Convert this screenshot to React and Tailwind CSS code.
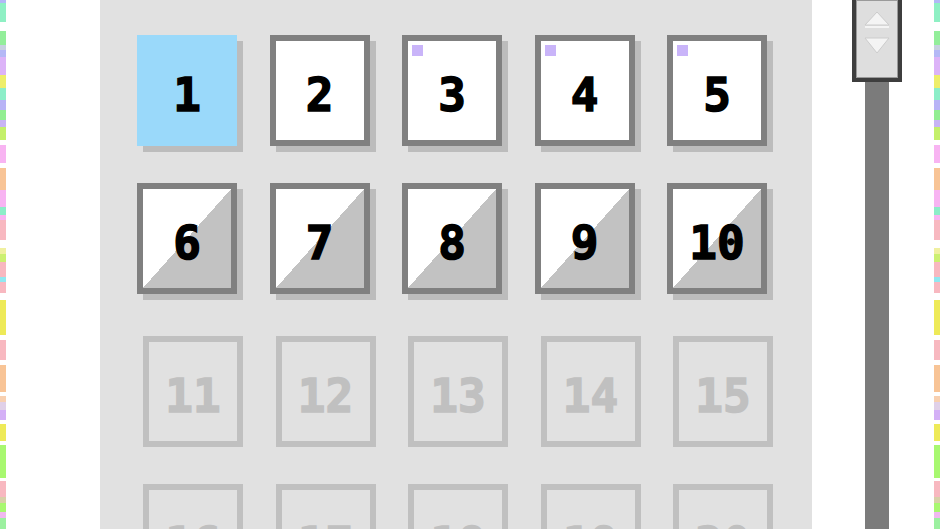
import React from "react";

// pastel edge strip, top to bottom
const stripe = [
  "h-[3px] bg-[#b3b8f7]",
  "h-[19px] bg-[#8ff0c4]",
  "h-[9px] bg-white",
  "h-[14px] bg-[#93ee9a]",
  "h-[5px] bg-[#c7d0e0]",
  "h-[7px] bg-[#b4b8f6]",
  "h-[18px] bg-[#dcb3f8]",
  "h-[13px] bg-[#eeee6a]",
  "h-[12px] bg-[#8ceec8]",
  "h-[10px] bg-[#b8b4f6]",
  "h-[10px] bg-[#92ee92]",
  "h-[7px] bg-[#c8b4f4]",
  "h-[13px] bg-[#c4f06a]",
  "h-[5px] bg-white",
  "h-[18px] bg-[#f8b4f2]",
  "h-[5px] bg-white",
  "h-[22px] bg-[#f8c496]",
  "h-[17px] bg-[#f8b4f2]",
  "h-[8px] bg-[#8ceec8]",
  "h-[5px] bg-[#f8b4f2]",
  "h-[20px] bg-[#f8b8c0]",
  "h-[8px] bg-white",
  "h-[6px] bg-[#f0f0a0]",
  "h-[8px] bg-[#ccf070]",
  "h-[15px] bg-[#f8b8c0]",
  "h-[5px] bg-[#90e8f0]",
  "h-[11px] bg-[#f8b8c0]",
  "h-[7px] bg-white",
  "h-[35px] bg-[#eeea58]",
  "h-[5px] bg-white",
  "h-[20px] bg-[#f8b8c0]",
  "h-[5px] bg-white",
  "h-[27px] bg-[#f8c496]",
  "h-[4px] bg-white",
  "h-[6px] bg-[#f8d0b0]",
  "h-[8px] bg-[#e0d0e8]",
  "h-[10px] bg-[#d4b0f6]",
  "h-[4px] bg-white",
  "h-[17px] bg-[#eeea58]",
  "h-[4px] bg-white",
  "h-[33px] bg-[#a8f870]",
  "h-[3px] bg-white",
  "h-[16px] bg-[#f8b8c0]",
  "h-[6px] bg-[#d8d0a8]",
  "h-[9px] bg-[#a8f870]",
  "h-[6px] bg-[#f0b8f0]",
  "h-[11px] bg-[#9cf0a0]",
];

function Stripe() {
  return (
    <div className="flex flex-col w-[6px] shrink-0">
      {stripe.map((cls, i) => (
        <div key={i} className={"shrink-0 " + cls} />
      ))}
    </div>
  );
}

const levels = [
  { n: 1, kind: "current" },
  { n: 2, kind: "open" },
  { n: 3, kind: "marked" },
  { n: 4, kind: "marked" },
  { n: 5, kind: "marked" },
  { n: 6, kind: "half" },
  { n: 7, kind: "half" },
  { n: 8, kind: "half" },
  { n: 9, kind: "half" },
  { n: 10, kind: "half" },
  ...Array.from({ length: 10 }, (_, i) => ({ n: 11 + i, kind: "locked" })),
];

const label =
  "font-['DejaVu_Sans_Mono',monospace] font-bold text-[46px] leading-none pt-[9px] [-webkit-text-stroke:1.5px]";

function LevelTile({ n, kind }) {
  if (kind === "locked") {
    return (
      <div className="h-[111px] translate-x-[6px] translate-y-[6px] border-[6px] border-[#c0c0c0] flex items-center justify-center">
        <span className={label + " text-[#c0c0c0]"}>{n}</span>
      </div>
    );
  }

  if (kind === "current") {
    return (
      <div className="h-[111px] bg-[#9ad9fa] shadow-[6px_6px_0_#bcbcbc] flex items-center justify-center">
        <span className={label + " text-black"}>{n}</span>
      </div>
    );
  }

  const fill =
    kind === "half"
      ? "bg-[linear-gradient(to_top_left,#c2c2c2_50%,#ffffff_50%)]"
      : "bg-white";

  return (
    <div
      className={
        "relative h-[111px] border-[6px] border-[#808080] shadow-[6px_6px_0_#bcbcbc] flex items-center justify-center " +
        fill
      }
    >
      {kind === "marked" && (
        <div className="absolute left-[4px] top-[4px] w-[11px] h-[11px] bg-[#c9b4f9]" />
      )}
      <span className={label + " text-black"}>{n}</span>
    </div>
  );
}

function ScrollBar() {
  return (
    <div className="flex flex-col items-center w-[50px] shrink-0">
      <div className="w-[50px] h-[82px] shrink-0 border-x-4 border-b-4 border-[#3e3e3e] bg-[#dedede] shadow-[inset_0_0_0_1px_#9a9a9a] flex flex-col items-center pt-[10px] gap-[6px]">
        <svg width="28" height="20" viewBox="0 0 28 20">
          <polygon points="14,2 26,15 2,15" fill="#f4f4f4" stroke="#cccccc" strokeWidth="1" />
          <rect x="2" y="16" width="24" height="2" fill="#f4f4f4" />
        </svg>
        <svg width="28" height="20" viewBox="0 0 28 20">
          <polygon points="2,2 26,2 14,17" fill="#f4f4f4" stroke="#cccccc" strokeWidth="1" />
        </svg>
      </div>
      <div className="w-[24px] flex-1 bg-[#7b7b7b]" />
    </div>
  );
}

export default function App() {
  return (
    <div className="flex w-[940px] h-[529px] overflow-hidden bg-white">
      <Stripe />
      <div className="w-[94px] shrink-0" />
      <div className="w-[712px] shrink-0 bg-[#e1e1e1] pl-[37px] pt-[35px]">
        <div className="grid grid-cols-[repeat(5,100px)] gap-x-[32.5px] gap-y-[36.5px]">
          {levels.map((l) => (
            <LevelTile key={l.n} n={l.n} kind={l.kind} />
          ))}
        </div>
      </div>
      <div className="w-[40px] shrink-0" />
      <ScrollBar />
      <div className="w-[32px] shrink-0" />
      <Stripe />
    </div>
  );
}
